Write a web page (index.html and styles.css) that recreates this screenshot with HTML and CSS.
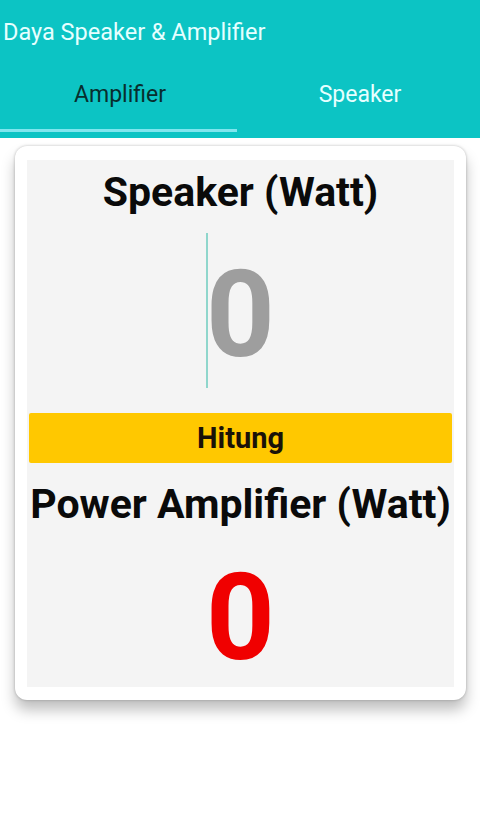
FILE: index.html
```html
<!DOCTYPE html>
<html lang="id">
<head>
<meta charset="utf-8">
<title>Daya Speaker &amp; Amplifier</title>
<link rel="stylesheet" href="styles.css">
</head>
<body>
<header class="appbar">
  <div class="title">Daya Speaker &amp; Amplifier</div>
  <nav class="tabs">
    <div class="tab active"><span class="tab-label">Amplifier</span><span class="tab-ind"></span></div>
    <div class="tab"><span class="tab-label">Speaker</span><span class="tab-ind"></span></div>
  </nav>
</header>
<main class="card">
  <div class="panel">
    <h2 class="label label-top">Speaker (Watt)</h2>
    <div class="input"><span class="value">0<span class="caret"></span></span></div>
    <button class="btn">Hitung</button>
    <h2 class="label label-bottom">Power Amplifier (Watt)</h2>
    <div class="result">0</div>
  </div>
</main>
</body>
</html>
```
FILE: styles.css
```css
* { box-sizing: border-box; }
html, body { margin: 0; padding: 0; }
body {
  width: 480px;
  height: 818px;
  background: #ffffff;
  font-family: Roboto, "Liberation Sans", sans-serif;
  overflow: hidden;
}
.appbar {
  background: #0cc4c4;
  height: 138px;
  display: flex;
  flex-direction: column;
}
.title {
  height: 64px;
  line-height: 64px;
  padding-left: 3px;
  font-size: 23.5px;
  color: #e6ffff;
}
.tabs {
  display: flex;
  height: 74px;
}
.tab {
  flex: 1;
  display: flex;
  flex-direction: column;
  align-items: center;
}
.tab-label {
  height: 65px;
  padding-top: 18px;
  line-height: 26px;
  font-size: 23px;
  color: #e6ffff;
}
.tab.active .tab-label { color: #082e2e; }
.tab-ind {
  width: 100%;
  height: 3px;
}
.tab.active .tab-ind { background: #7fe6ee; width: 237px; align-self: flex-start; }

.card {
  margin: 8px 14px 0 15px;
  background: #ffffff;
  border-radius: 12px;
  padding: 14px 12px 13px 12px;
  box-shadow: 0 10px 14px rgba(0,0,0,0.25), 0 0 3px rgba(0,0,0,0.25);
}
.panel {
  background: #f4f4f4;
  display: flex;
  flex-direction: column;
  align-items: stretch;
  padding-bottom: 9px;
}
.label {
  margin: 0;
  font-size: 41px;
  line-height: 56px;
  font-weight: 700;
  text-align: center;
  color: #0a0a0a;
  white-space: nowrap;
}
.label-top { margin-top: 4px; }
.label-bottom { margin-top: 13px; }
.input {
  height: 190px;
  display: flex;
  align-items: center;
  justify-content: center;
}
.value {
  position: relative;
  font-size: 120px;
  line-height: 120px;
  font-weight: 700;
  color: #9e9e9e;
}
.caret {
  position: absolute;
  left: 0;
  top: -22px;
  width: 2px;
  height: 155px;
  background: #8fd6cc;
}
.btn {
  margin: 3px 2px 0 2px;
  height: 50px;
  border: none;
  border-radius: 2px;
  background: #ffc800;
  font-family: Roboto, "Liberation Sans", sans-serif;
  font-size: 29px;
  font-weight: 700;
  color: #1a1208;
  padding: 0;
}
.result {
  margin-top: 26px;
  font-size: 120px;
  line-height: 120px;
  font-weight: 700;
  text-align: center;
  color: #f00000;
}
```
